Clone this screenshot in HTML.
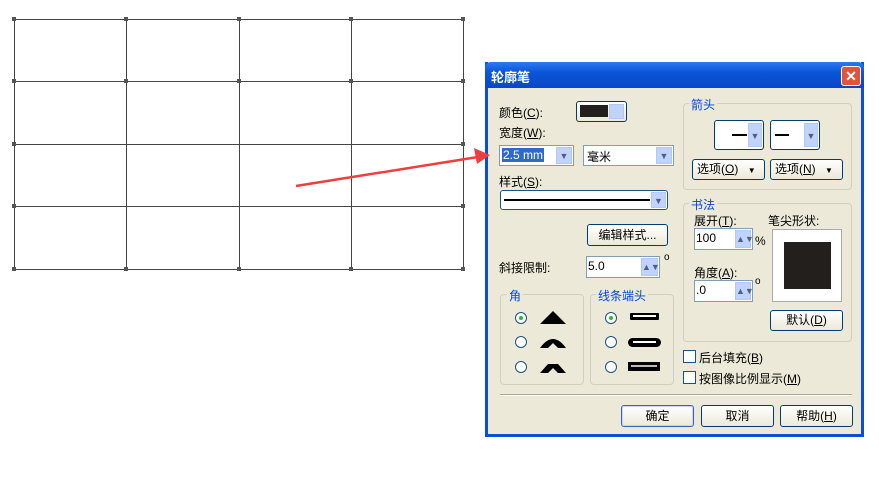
<!DOCTYPE html><html><head><meta charset="utf-8"><style>
body{margin:0;width:879px;height:490px;background:#fff;position:relative;overflow:hidden;font-family:"Liberation Sans","Noto Sans CJK SC",sans-serif;font-size:12px;color:#000}
.a{position:absolute}
.dlg{left:485px;top:62px;width:379px;height:375px;background:#ece9d8;border:3px solid #0a4fd4;border-top:none;box-sizing:border-box}
.tb{left:485px;top:62px;width:379px;height:26px;background:linear-gradient(#2e7af0,#0a55d8 40%,#0847c6);border-radius:6px 6px 0 0}
.inp{background:#fff;border:1px solid #7f9db9;box-sizing:border-box}
.btn{background:linear-gradient(#fff,#ece9d8);border:1px solid #003c74;border-radius:3px;box-sizing:border-box;text-align:center}
.dd{background:#c1d3fb;border:1px solid #b4c8f6;box-sizing:border-box;color:#4d6185;font-size:9px;text-align:center;line-height:16px}
.grp{border:1px solid #d0d0bf;border-radius:4px;box-sizing:border-box}
.gl{color:#0046d5;background:#ece9d8;padding:0 2px}
.rad{width:12px;height:12px;border:1px solid #1c5180;border-radius:50%;background:#fff;box-sizing:border-box}
.cb{width:13px;height:13px;border:1px solid #1c5180;background:#fff;box-sizing:border-box}
u{text-decoration:underline}
</style></head><body>
<svg class="a" style="left:0;top:0" width="879" height="490">
<g stroke="#444" stroke-width="1" fill="none">
<rect x="14.5" y="19.5" width="449" height="250"/>
<line x1="126.5" y1="19" x2="126.5" y2="269"/><line x1="239.5" y1="19" x2="239.5" y2="269"/><line x1="351.5" y1="19" x2="351.5" y2="269"/>
<line x1="14" y1="81.5" x2="463" y2="81.5"/><line x1="14" y1="144.5" x2="463" y2="144.5"/><line x1="14" y1="206.5" x2="463" y2="206.5"/>
</g>
<g fill="#555">
<rect x="12" y="17" width="4" height="4"/><rect x="124" y="17" width="4" height="4"/><rect x="237" y="17" width="4" height="4"/><rect x="349" y="17" width="4" height="4"/><rect x="461" y="17" width="4" height="4"/>
<rect x="12" y="79" width="4" height="4"/><rect x="461" y="79" width="4" height="4"/><rect x="124" y="79" width="4" height="4"/><rect x="237" y="79" width="4" height="4"/><rect x="349" y="79" width="4" height="4"/>
<rect x="12" y="142" width="4" height="4"/><rect x="461" y="142" width="4" height="4"/><rect x="12" y="204" width="4" height="4"/><rect x="461" y="204" width="4" height="4"/>
<rect x="12" y="267" width="4" height="4"/><rect x="124" y="267" width="4" height="4"/><rect x="237" y="267" width="4" height="4"/><rect x="349" y="267" width="4" height="4"/><rect x="461" y="267" width="4" height="4"/>
</g>
</svg>
<div class="a dlg"></div>
<div class="a tb"></div>
<div class="a" style="left:491px;top:67px;color:#fff;font-weight:bold;font-size:13px">轮廓笔</div>
<div class="a" style="left:841px;top:66px;width:20px;height:20px;background:#e0553a;border:1px solid #fff;border-radius:3px;box-sizing:border-box;color:#fff;font-weight:bold;text-align:center;line-height:18px;font-size:14px">✕</div>

<div class="a" style="left:499px;top:104px">颜色(<u>C</u>):</div>
<div class="a btn" style="left:576px;top:101px;width:51px;height:21px"></div>
<div class="a" style="left:580px;top:105px;width:28px;height:12px;background:#231f1c"></div>
<div class="a dd" style="left:609px;top:104px;width:15px;height:15px"></div>
<div class="a" style="left:499px;top:124px">宽度(<u>W</u>):</div>
<div class="a inp" style="left:499px;top:145px;width:75px;height:21px"></div>
<div class="a" style="left:502px;top:148px;background:#316ac5;color:#fff;padding:0 1px;font-size:12px">2.5 mm</div>
<div class="a dd" style="left:556px;top:147px;width:16px;height:17px">▼</div>
<div class="a inp" style="left:583px;top:145px;width:91px;height:21px"></div>
<div class="a" style="left:587px;top:148px">毫米</div>
<div class="a dd" style="left:656px;top:147px;width:16px;height:17px">▼</div>
<div class="a" style="left:499px;top:173px">样式(<u>S</u>):</div>
<div class="a inp" style="left:500px;top:190px;width:168px;height:20px;border-color:#1c5180;border-radius:3px"></div>
<div class="a" style="left:504px;top:199px;width:146px;height:2px;background:#000"></div>
<div class="a dd" style="left:651px;top:192px;width:15px;height:16px">▼</div>
<div class="a btn" style="left:587px;top:224px;width:81px;height:22px;line-height:20px">编辑样式...</div>
<div class="a" style="left:499px;top:259px">斜接限制:</div>
<div class="a inp" style="left:586px;top:256px;width:74px;height:22px"></div>
<div class="a" style="left:588px;top:259px">5.0</div>
<div class="a dd" style="left:641px;top:258px;width:17px;height:18px">▲▼</div>
<div class="a" style="left:664px;top:252px;font-size:10px">o</div>

<div class="a grp" style="left:500px;top:294px;width:84px;height:91px"></div>
<div class="a gl" style="left:507px;top:287px">角</div>
<div class="a grp" style="left:590px;top:294px;width:84px;height:91px"></div>
<div class="a gl" style="left:596px;top:287px">线条端头</div>
<div class="a rad" style="left:515px;top:312px"><div style="width:4px;height:4px;background:#2fb82f;border-radius:50%;margin:3px"></div></div>
<div class="a rad" style="left:515px;top:336px"></div>
<div class="a rad" style="left:515px;top:361px"></div>
<div class="a rad" style="left:605px;top:312px"><div style="width:4px;height:4px;background:#2fb82f;border-radius:50%;margin:3px"></div></div>
<div class="a rad" style="left:605px;top:336px"></div>
<div class="a rad" style="left:605px;top:361px"></div>
<svg class="a" style="left:538px;top:308px" width="34" height="70"><path d="M2 16 L15 3 L28 16 Z" fill="#000"/><path d="M2 40 Q15 22 28 40 L20 40 L15 35 L10 40 Z" fill="#000"/><path d="M2 65 L10 56 L20 56 L28 65 L20 65 L15 60 L10 65 Z" fill="#000"/></svg>
<div class="a" style="left:630px;top:313px;width:29px;height:7px;background:#000;border-radius:1px"><div style="margin:2px 3px;height:2px;background:#fff"></div></div>
<div class="a" style="left:628px;top:338px;width:33px;height:9px;background:#000;border-radius:5px"><div style="margin:3px 5px;height:2px;background:#fff"></div></div>
<div class="a" style="left:628px;top:362px;width:32px;height:9px;background:#000"><div style="margin:3px 3px;height:2px;background:#bbb"></div></div>

<div class="a grp" style="left:683px;top:103px;width:169px;height:87px"></div>
<div class="a gl" style="left:689px;top:96px">箭头</div>
<div class="a btn" style="left:714px;top:120px;width:50px;height:30px;background:#fff"></div>
<div class="a" style="left:732px;top:134px;width:15px;height:2px;background:#000"></div>
<div class="a dd" style="left:748px;top:123px;width:14px;height:24px;line-height:24px">▼</div>
<div class="a btn" style="left:770px;top:120px;width:50px;height:30px;background:#fff"></div>
<div class="a" style="left:775px;top:134px;width:14px;height:2px;background:#000"></div>
<div class="a dd" style="left:804px;top:123px;width:14px;height:24px;line-height:24px">▼</div>
<div class="a btn" style="left:692px;top:159px;width:73px;height:21px;line-height:19px;text-align:left;padding-left:4px">选项(<u>O</u>) <span style="font-size:8px;margin-left:6px">▼</span></div>
<div class="a btn" style="left:770px;top:159px;width:73px;height:21px;line-height:19px;text-align:left;padding-left:4px">选项(<u>N</u>) <span style="font-size:8px;margin-left:6px">▼</span></div>

<div class="a grp" style="left:683px;top:203px;width:169px;height:139px"></div>
<div class="a gl" style="left:689px;top:196px">书法</div>
<div class="a" style="left:694px;top:212px">展开(<u>T</u>):</div>
<div class="a" style="left:768px;top:212px">笔尖形状:</div>
<div class="a inp" style="left:694px;top:228px;width:59px;height:22px"></div>
<div class="a" style="left:696px;top:231px">100</div>
<div class="a dd" style="left:735px;top:230px;width:16px;height:18px">▲▼</div>
<div class="a" style="left:755px;top:234px">%</div>
<div class="a" style="left:772px;top:229px;width:70px;height:73px;background:#fff;border:1px solid #aaa;box-sizing:border-box"></div>
<div class="a" style="left:784px;top:242px;width:47px;height:47px;background:#231f1c"></div>
<div class="a" style="left:694px;top:264px">角度(<u>A</u>):</div>
<div class="a inp" style="left:694px;top:280px;width:59px;height:22px"></div>
<div class="a" style="left:696px;top:283px">.0</div>
<div class="a dd" style="left:735px;top:282px;width:16px;height:18px">▲▼</div>
<div class="a" style="left:755px;top:276px;font-size:10px">o</div>
<div class="a btn" style="left:770px;top:310px;width:73px;height:21px;line-height:19px">默认(<u>D</u>)</div>

<div class="a cb" style="left:683px;top:350px"></div>
<div class="a" style="left:699px;top:349px">后台填充(<u>B</u>)</div>
<div class="a cb" style="left:683px;top:371px"></div>
<div class="a" style="left:699px;top:370px">按图像比例显示(<u>M</u>)</div>

<div class="a" style="left:500px;top:394px;width:352px;height:2px;border-top:1px solid #aca899;border-bottom:1px solid #fff;box-sizing:border-box"></div>
<div class="a btn" style="left:621px;top:405px;width:73px;height:22px;line-height:20px;border-color:#3d5fbe;box-shadow:inset 0 0 0 1px #c6d7fc">确定</div>
<div class="a btn" style="left:701px;top:405px;width:73px;height:22px;line-height:20px">取消</div>
<div class="a btn" style="left:780px;top:405px;width:73px;height:22px;line-height:20px">帮助(<u>H</u>)</div>

<svg class="a" style="left:0;top:0" width="879" height="490"><line x1="296" y1="186" x2="478" y2="157" stroke="#ee3e3e" stroke-width="2.5"/><path d="M490 155 L474 148 L477 164 Z" fill="#ee3e3e"/></svg>
</body></html>
